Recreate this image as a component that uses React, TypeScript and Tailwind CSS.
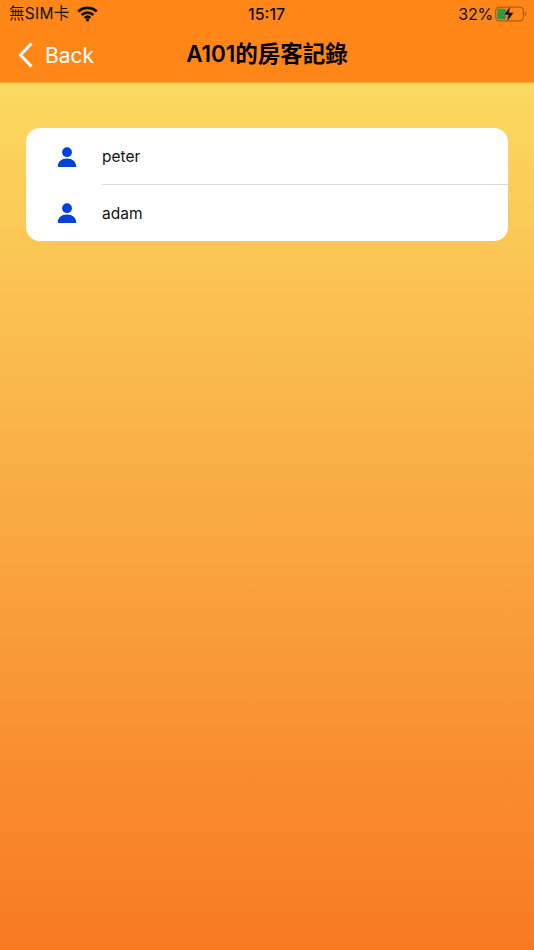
import React from "react";

const font = { fontFamily: 'Inter, "Noto Sans CJK TC", sans-serif' };

function Wifi() {
  return (
    <svg width="21" height="16" viewBox="0 0 21 16" fill="none" stroke="#111" strokeWidth="2.8">
      <path d="M1.2 5.6C6.4.6 14.6.6 19.8 5.6" />
      <path d="M4.6 9C7.9 5.9 13.1 5.9 16.4 9" />
      <path d="M7.7 12C9.3 10.6 11.7 10.6 13.3 12" />
      <circle cx="10.5" cy="14" r="1.6" fill="#111" stroke="none" />
    </svg>
  );
}

function Battery() {
  return (
    <svg width="32" height="18" viewBox="0 0 32 18">
      <rect x="0.6" y="2.1" width="27.8" height="13.8" rx="3.8" fill="none" stroke="#a85f1a" strokeWidth="1.2" />
      <rect x="2.2" y="3.7" width="8.5" height="10.6" rx="1.6" fill="#279a45" />
      <path d="M29.8 6.8C31 7.2 31.4 8 31.4 9s-.4 1.8-1.6 2.2z" fill="#a85f1a" />
      <path d="M15.6.4 8.6 10h4.6l-1.8 7.6L19 7.4h-4.8z" fill="#111" stroke="#ff8617" strokeWidth="0.6" />
    </svg>
  );
}

function Person() {
  return (
    <svg width="20" height="20" viewBox="0 0 20 20" fill="#0040dd">
      <circle cx="10" cy="5.2" r="4.9" />
      <path d="M.8 19.6C.8 14.6 4.6 11.6 10 11.6s9.2 3 9.2 8c0 .3-.2.4-.5.4H1.3c-.3 0-.5-.1-.5-.4z" />
    </svg>
  );
}

export default function App() {
  return (
    <div className="flex flex-col w-[534px] h-[950px] overflow-hidden" style={font}>
      <header className="bg-[#ff8617] h-[83px] shrink-0 flex flex-col border-b border-[#f5a53a]">
        <div className="relative flex items-center justify-between h-[27px] pl-[9px] pr-[7px] text-[#111] text-[15.5px]">
          <div className="flex items-center gap-[7px]">
            <span className="tracking-[0.3px]">無SIM卡</span>
            <Wifi />
          </div>
          <span className="absolute left-[248px] font-medium text-[16px]">15:17</span>
          <div className="flex items-center gap-[2px]">
            <span className="text-[16px] tracking-[-0.2px]">32%</span>
            <Battery />
          </div>
        </div>
        <div className="relative flex items-center justify-center flex-1">
          <div className="absolute left-[18px] top-[15px] flex items-center gap-[12px] text-white">
            <svg width="15" height="26" viewBox="0 0 15 26" fill="none" stroke="#fff" strokeWidth="3" strokeLinecap="square">
              <path d="M12.5 2.5 2.5 13l10 10.5" />
            </svg>
            <span className="text-[21px] leading-none">Back</span>
          </div>
          <h1 className="text-[22.5px] font-semibold text-black leading-none">A101的房客記錄</h1>
        </div>
      </header>
      <main className="flex-1 px-[26px] pt-[45px] bg-linear-to-b/srgb from-[#fbd961] to-[#f87924]">
        <ul className="bg-white rounded-[14px] overflow-hidden">
          <li className="flex items-center h-[57px]">
            <span className="flex justify-center w-[76px] pl-[6px] shrink-0"><Person /></span>
            <div className="flex items-center flex-1 h-full border-b border-[#d9d9d9] text-[15.5px] text-[#111] pt-[1px]">peter</div>
          </li>
          <li className="flex items-center h-[56px]">
            <span className="flex justify-center w-[76px] pl-[6px] shrink-0"><Person /></span>
            <div className="flex items-center flex-1 h-full text-[15.5px] text-[#111] pt-[1px]">adam</div>
          </li>
        </ul>
      </main>
    </div>
  );
}
